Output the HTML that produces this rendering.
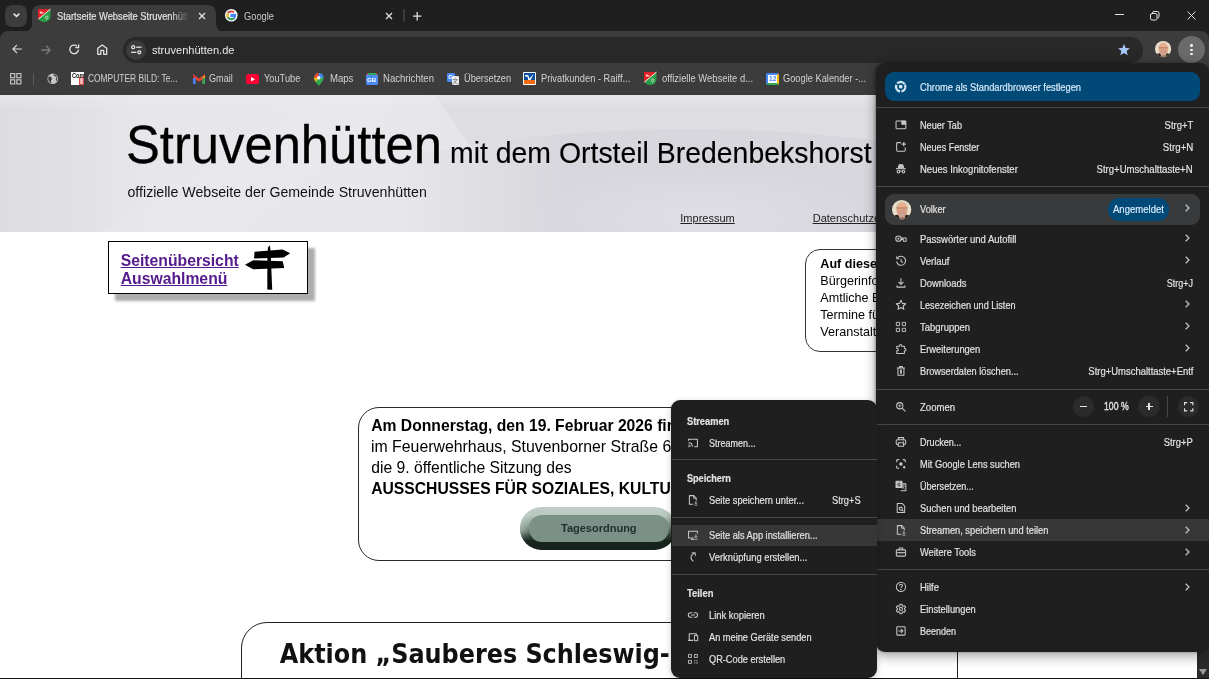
<!DOCTYPE html>
<html lang="de"><head><meta charset="utf-8"><title>Startseite Webseite Struvenhütten</title>
<style>
*{box-sizing:border-box;margin:0;padding:0}
html,body{width:1209px;height:679px;overflow:hidden;background:#fff;font-family:"Liberation Sans",sans-serif}
#root{position:relative;width:1209px;height:679px;overflow:hidden;will-change:transform;opacity:.999}
svg{overflow:visible}
a{color:inherit}
.u{-webkit-text-stroke:0.18px currentColor}
</style></head><body><div id="root">
<div style="position:absolute;left:0;top:94px;width:1209px;height:585px;background:#fff;overflow:hidden">
<div style="position:absolute;left:0;top:0;width:1209px;height:137.5px;background:linear-gradient(90deg,#dcdce1 0%,#e0e0e5 6%,#e7e7eb 12%,#e8e8ec 30%,#e6e6ea 37%,#e5e5e9 100%);overflow:hidden"><svg style="position:absolute;left:0;top:0" width="1209" height="138" viewBox="0 0 1209 138"><defs><linearGradient id="bgf" gradientUnits="userSpaceOnUse" x1="400" y1="0" x2="560" y2="0"><stop offset="0" stop-color="#d7d7dd" stop-opacity="0"/><stop offset="1" stop-color="#d7d7dd" stop-opacity="1"/></linearGradient><radialGradient id="bgh" gradientUnits="userSpaceOnUse" cx="700" cy="125" r="170" gradientTransform="translate(0 87) scale(1 .3)"><stop offset="0" stop-color="#e0e0e6" stop-opacity=".8"/><stop offset="1" stop-color="#e0e0e6" stop-opacity="0"/></radialGradient></defs><path d="M100 138 L330 0 L412 0 L240 138 Z" fill="#ececf0" opacity=".3"/><path d="M434 0 H1209 V145 H1110 A420 110 0 0 0 470 51.3 Z" fill="#dddde2"/><ellipse cx="690" cy="145" rx="420" ry="110" fill="url(#bgf)"/><ellipse cx="700" cy="125" rx="170" ry="45" fill="url(#bgh)"/></svg><div style="position:absolute;left:0;top:0;width:1209px;height:16px;background:linear-gradient(180deg,rgba(236,236,240,.6),rgba(236,236,240,0))"></div></div>
</div>
<span style="position:absolute;top:114.10px;height:62px;line-height:62px;font-size:53.5px;font-weight:400;color:#000;white-space:pre;left:126.30px;-webkit-text-stroke:0.3px #000;transform:scaleX(.9484);transform-origin:0 50%;">Struvenhütten</span>
<span style="position:absolute;top:135.10px;height:36px;line-height:36px;font-size:29.7px;font-weight:400;color:#000;white-space:pre;left:450.40px;-webkit-text-stroke:0.15px #000;transform:scaleX(.957);transform-origin:0 50%;">mit dem Ortsteil Bredenbekshorst</span>
<span style="position:absolute;top:183.30px;height:18px;line-height:18px;font-size:14.17px;font-weight:400;color:#111;white-space:pre;left:127.50px;">offizielle Webseite der Gemeinde Struvenhütten</span>
<span style="position:absolute;top:211.40px;height:14px;line-height:14px;font-size:11.02px;font-weight:400;color:#222;white-space:pre;left:680.30px;text-decoration:underline;">Impressum</span>
<span style="position:absolute;top:211.40px;height:14px;line-height:14px;font-size:11.02px;font-weight:400;color:#222;white-space:pre;left:812.70px;text-decoration:underline;">Datenschutzerklärung</span>
<div style="position:absolute;left:108px;top:240.5px;width:200.2px;height:53.4px;background:#fff;border:1.6px solid #000;box-shadow:7px 7px 2.5px #adadad;"></div>
<span style="position:absolute;top:252.20px;height:18px;line-height:18px;font-size:15.74px;font-weight:700;color:#551a8b;white-space:pre;left:120.70px;text-decoration:underline;">Seitenübersicht</span>
<span style="position:absolute;top:269.70px;height:18px;line-height:18px;font-size:15.74px;font-weight:700;color:#551a8b;white-space:pre;left:120.70px;text-decoration:underline;">Auswahlmenü</span>
<svg style="position:absolute;left:245.00px;top:245.00px;" width="45" height="45" viewBox="0 0 45 45"><g fill="#000"><path d="M23 2.4 L25 0.2 L25.6 8 L22.6 8 Z"/><path d="M9.5 6.8 L37.7 4.6 L45.2 8.2 L38.6 12.6 L9.1 13.6 Z"/><path d="M0 19.8 L8.2 15.3 L37.7 16.3 L39.2 23 L8.2 24.3 Z"/><path d="M22.4 6 L25.6 6 L27.2 44.8 L22.3 44.6 Z"/></g></svg>
<div style="position:absolute;left:805px;top:248.9px;width:140px;height:103.6px;background:#fff;border:1px solid #333;border-radius:15px;"></div>
<span style="position:absolute;top:256.10px;height:16px;line-height:16px;font-size:12.6px;font-weight:700;color:#000;white-space:pre;left:820.30px;">Auf dieser Seite</span>
<span style="position:absolute;top:273.00px;height:16px;line-height:16px;font-size:12.6px;font-weight:400;color:#000;white-space:pre;left:820.30px;">Bürgerinformationen</span>
<span style="position:absolute;top:289.90px;height:16px;line-height:16px;font-size:12.6px;font-weight:400;color:#000;white-space:pre;left:820.30px;">Amtliche Bekanntmachungen</span>
<span style="position:absolute;top:306.80px;height:16px;line-height:16px;font-size:12.6px;font-weight:400;color:#000;white-space:pre;left:820.30px;">Termine für die Gemeinde</span>
<span style="position:absolute;top:323.70px;height:16px;line-height:16px;font-size:12.6px;font-weight:400;color:#000;white-space:pre;left:820.30px;">Veranstaltungen</span>
<div style="position:absolute;left:358px;top:406.7px;width:420px;height:154px;background:#fff;border:1px solid #2a2a2a;border-radius:21px;"></div>
<span style="position:absolute;top:415.80px;height:20px;line-height:20px;font-size:15.7px;font-weight:700;color:#000;white-space:pre;left:371.20px;">Am Donnerstag, den 19. Februar 2026 findet um 19:30 Uhr</span>
<span style="position:absolute;top:437.00px;height:20px;line-height:20px;font-size:15.7px;font-weight:400;color:#000;white-space:pre;left:371.20px;transform:scaleX(1.01);transform-origin:0 50%;">im Feuerwehrhaus, Stuvenborner Straße 6, Struvenhütten</span>
<span style="position:absolute;top:458.20px;height:20px;line-height:20px;font-size:15.7px;font-weight:400;color:#000;white-space:pre;left:371.20px;">die 9. öffentliche Sitzung des</span>
<span style="position:absolute;top:479.40px;height:20px;line-height:20px;font-size:15.7px;font-weight:700;color:#000;white-space:pre;left:371.20px;">AUSSCHUSSES FÜR SOZIALES, KULTUR UND SPORT statt.</span>
<div style="position:absolute;left:520.4px;top:506.8px;width:156px;height:42.9px;border-radius:21.5px;background:linear-gradient(180deg,#becdc5 0%,#b9c9c0 20%,#7f948a 42%,#31443a 66%,#17241d 79%,#15221b 100%);"></div>
<div style="position:absolute;left:520.4px;top:506.8px;width:156px;height:42.9px;border-radius:21.5px;background:linear-gradient(90deg,rgba(205,216,209,.6) 0,rgba(205,216,209,0) 13px);-webkit-mask-image:linear-gradient(180deg,#000 0,#000 55%,transparent 80%);mask-image:linear-gradient(180deg,#000 0,#000 55%,transparent 80%)"></div>
<div style="position:absolute;left:528.8px;top:515.3px;width:140px;height:26.5px;border-radius:13.2px;background:#7b9187;"></div>
<span style="position:absolute;top:521.30px;height:14px;line-height:14px;font-size:11.0px;font-weight:700;color:#1f2f2a;white-space:pre;left:561.00px;">Tagesordnung</span>
<div style="position:absolute;left:240.5px;top:622px;width:717.5px;height:90px;background:#fff;border:1.2px solid #222;border-radius:26px;"></div>
<span style="position:absolute;top:637.00px;height:34px;line-height:34px;font-size:26.6px;font-weight:700;color:#111;white-space:pre;font-family:'DejaVu Sans Condensed','DejaVu Sans',sans-serif;left:279.80px;letter-spacing:-0.02px;">Aktion „Sauberes Schleswig-Holstein“</span>
<div style="position:absolute;left:1197px;top:94px;width:12px;height:585px;background:#2b2b2b;"></div>
<svg style="position:absolute;left:1199.00px;top:669.00px;" width="8" height="6" viewBox="0 0 8 6"><path d="M0 0 L8 0 L4 6 Z" fill="#9b9b9b"/></svg>
<div style="position:absolute;left:0px;top:677.6px;width:1209px;height:2px;background:#111;"></div>
<div style="position:absolute;left:0px;top:0px;width:1209px;height:42px;background:#1f1f1f;"></div>
<div style="position:absolute;left:0px;top:31px;width:1209px;height:63.5px;background:#3c3c3c;border-radius:8px 8px 0 0;"></div>
<div style="position:absolute;left:5px;top:5px;width:22px;height:21.5px;background:#3c3c3c;border-radius:7px;"></div>
<svg style="position:absolute;left:12.50px;top:13.20px;" width="7" height="4.5" viewBox="0 0 7 4.5"><path d="M0.6 0.6 L3.5 3.4 L6.4 0.6" fill="none" stroke="#e3e3e3" stroke-width="1.5"/></svg>
<div style="position:absolute;left:32px;top:5px;width:183.5px;height:27px;background:#3c3c3c;border-radius:8px 8px 0 0;"></div>
<svg style="position:absolute;left:24.00px;top:24.00px;" width="8" height="8" viewBox="0 0 8 8"><path d="M8 0 L8 8 L0 8 A8 8 0 0 0 8 0 Z" fill="#3c3c3c"/></svg>
<svg style="position:absolute;left:215.50px;top:24.00px;" width="8" height="8" viewBox="0 0 8 8"><path d="M0 0 L0 8 L8 8 A8 8 0 0 1 0 0 Z" fill="#3c3c3c"/></svg>
<svg style="position:absolute;left:37.90px;top:9.00px;" width="12.5" height="13.2" viewBox="0 0 12.5 13.2"><path d="M0 0 H12.5 V6.8 Q12.5 12.6 6.25 13.2 Q0 12.6 0 6.8 Z" fill="#2c9c49"/><path d="M0 0 H12.5 L0 10.2 Z" fill="#df2226"/><path d="M12.4 0.2 L0.3 10.2" stroke="#fff" stroke-width="0.9"/><path d="M1.6 3 L3.2 2.2 L4 3.6 L5.4 3 L5.2 4.4 L2 4.4 Z" fill="#fff" opacity=".85"/><circle cx="8.7" cy="8.3" r="1.3" fill="none" stroke="#fff" stroke-width="0.7" opacity=".85"/><path d="M8 10.4 L9 11.2" stroke="#fff" stroke-width="0.6" opacity=".7"/></svg>
<div style="position:absolute;left:57px;top:8px;width:133px;height:17px;overflow:hidden;-webkit-mask-image:linear-gradient(90deg,#000 114px,transparent 132px);mask-image:linear-gradient(90deg,#000 114px,transparent 132px)"><span class="u" style="position:absolute;top:1.70px;height:14px;line-height:14px;font-size:10.3px;font-weight:400;color:#e3e3e3;white-space:pre;transform:scaleX(0.9066);transform-origin:0 50%;left:0.00px;">Startseite Webseite Struvenhütten</span></div>
<svg style="position:absolute;left:198.00px;top:12.00px;" width="8" height="8" viewBox="0 0 8 8"><path d="M1 1 L7 7 M7 1 L1 7" stroke="#e3e3e3" stroke-width="1.3" fill="none"/></svg>
<svg style="position:absolute;left:224.90px;top:9.00px;" width="12.6" height="12.6" viewBox="0 0 14 14"><circle cx="7" cy="7" r="7" fill="#fff"/><path d="M7 2.7 A4.3 4.3 0 1 0 11.2 7.9 L7 7.9 L7 6.2 L12.4 6.2" fill="none" stroke="#4285f4" stroke-width="2.1"/><path d="M3.5 4.5 A4.3 4.3 0 0 1 10 3.8" fill="none" stroke="#ea4335" stroke-width="2.1"/><path d="M3.5 9.5 A4.3 4.3 0 0 1 3.5 4.5" fill="none" stroke="#fbbc05" stroke-width="2.1"/><path d="M10 10.2 A4.3 4.3 0 0 1 3.5 9.5" fill="none" stroke="#34a853" stroke-width="2.1"/></svg>
<span style="position:absolute;top:9.50px;height:14px;line-height:14px;font-size:10.3px;font-weight:400;color:#c9c9c9;white-space:pre;transform:scaleX(0.9031);transform-origin:0 50%;left:243.80px;">Google</span>
<svg style="position:absolute;left:384.70px;top:12.00px;" width="8" height="8" viewBox="0 0 8 8"><path d="M1 1 L7 7 M7 1 L1 7" stroke="#e3e3e3" stroke-width="1.3" fill="none"/></svg>
<div style="position:absolute;left:402.9px;top:9px;width:1.7px;height:12.8px;background:#3b3b3b;border-radius:1px;"></div>
<svg style="position:absolute;left:413.20px;top:11.60px;" width="8.4" height="8.4" viewBox="0 0 8.5 8.5"><path d="M4.25 0 V8.5 M0 4.25 H8.5" stroke="#e3e3e3" stroke-width="1.3" fill="none"/></svg>
<div style="position:absolute;left:1115px;top:14.2px;width:9px;height:1px;background:#e3e3e3;"></div>
<svg style="position:absolute;left:1150.00px;top:10.50px;" width="9.5" height="9.5" viewBox="0 0 9.5 9.5"><rect x="0.5" y="2.5" width="6.5" height="6.5" rx="1.5" fill="none" stroke="#e3e3e3" stroke-width="1"/><path d="M2.5 2.3 V2 Q2.5 0.5 4 0.5 H7.5 Q9 0.5 9 2 V5.5 Q9 7 7.5 7 H7.2" fill="none" stroke="#e3e3e3" stroke-width="1"/></svg>
<svg style="position:absolute;left:1186.50px;top:11.00px;" width="9" height="9" viewBox="0 0 9 9"><path d="M0.5 0.5 L8.5 8.5 M8.5 0.5 L0.5 8.5" stroke="#e3e3e3" stroke-width="1" fill="none"/></svg>
<svg style="position:absolute;left:12.20px;top:44.40px;" width="10" height="10" viewBox="0 0 10 10"><path d="M9.8 5 H1.2 M5 0.8 L0.9 5 L5 9.2" stroke="#dadada" stroke-width="1.2" fill="none"/></svg>
<svg style="position:absolute;left:40.50px;top:44.50px;" width="10" height="10" viewBox="0 0 10 10"><path d="M0.2 5 H8.8 M5 0.8 L9.1 5 L5 9.2" stroke="#7a7a7a" stroke-width="1.3" fill="none"/></svg>
<svg style="position:absolute;left:69.00px;top:44.20px;" width="10.5" height="10.5" viewBox="0 0 10.5 10.5"><path d="M9.4 5.6 A4.3 4.3 0 1 1 8 2.2" stroke="#e3e3e3" stroke-width="1.3" fill="none"/><path d="M9.6 0.4 V3.6 H6.4" stroke="#e3e3e3" stroke-width="1.3" fill="none"/></svg>
<svg style="position:absolute;left:97.00px;top:44.00px;" width="10.5" height="11" viewBox="0 0 10.5 11"><path d="M0.8 10.3 V4.2 L5.25 0.9 L9.7 4.2 V10.3 H6.7 V6.4 H3.8 V10.3 Z" stroke="#e3e3e3" stroke-width="1.3" fill="none" stroke-linejoin="round"/></svg>
<div style="position:absolute;left:123px;top:36.5px;width:1020px;height:26.3px;background:#282828;border-radius:13.5px;"></div>
<div style="position:absolute;left:125.5px;top:39.5px;width:20.5px;height:20.5px;background:#3c3c3c;border-radius:50%;"></div>
<svg style="position:absolute;left:130.50px;top:45.00px;" width="10.5" height="9.5" viewBox="0 0 10.5 9.5"><g fill="none" stroke="#e3e3e3" stroke-width="1.3"><circle cx="2.2" cy="2.2" r="1.5"/><path d="M5.2 2.2 H10.5"/><circle cx="8.3" cy="7.3" r="1.5"/><path d="M0 7.3 H5.3"/></g></svg>
<span style="position:absolute;top:42.20px;height:16px;line-height:16px;font-size:11.3px;font-weight:400;color:#e8e8e8;white-space:pre;transform:scaleX(0.9801);transform-origin:0 50%;left:151.80px;">struvenhütten.de</span>
<svg style="position:absolute;left:1118.00px;top:43.80px;" width="12" height="11.5" viewBox="0 0 12 11.5"><path d="M6 0 L7.6 4 L11.9 4.3 L8.6 7.1 L9.7 11.3 L6 9 L2.3 11.3 L3.4 7.1 L0.1 4.3 L4.4 4 Z" fill="#a8c7fa"/></svg>
<svg style="position:absolute;left:1155.30px;top:41.20px;" width="16.2" height="16.2" viewBox="0 0 20 20"><defs><clipPath id="avc1"><circle cx="10" cy="10" r="10"/></clipPath><filter id="avb1" x="-10%" y="-10%" width="120%" height="120%"><feGaussianBlur stdDeviation="0.45"/></filter></defs><circle cx="10" cy="10" r="10" fill="#ebdfc9"/><g clip-path="url(#avc1)"><g filter="url(#avb1)"><ellipse cx="10.2" cy="8" rx="6.6" ry="6.6" fill="#d6cec3"/><ellipse cx="10.3" cy="10.6" rx="5.6" ry="8" fill="#dda387"/><ellipse cx="10.3" cy="5.4" rx="4.2" ry="2.6" fill="#eeb08a" opacity=".8"/><path d="M4.2 8.2 H16" stroke="#8a5a42" stroke-width="0.55" fill="none" opacity=".85"/><path d="M5.8 8.3 H9.2 V9.3 H5.8 Z M11.2 8.3 H14.6 V9.3 H11.2 Z" fill="#c08264" opacity=".5"/><ellipse cx="10.3" cy="13.4" rx="4" ry="3.2" fill="#d39b86" opacity=".9"/><ellipse cx="10.3" cy="15.6" rx="3" ry="1.8" fill="#c9a596" opacity=".9"/><path d="M0.5 17.4 Q4.6 14.2 6.4 15.6 L8.2 19.4 H12.6 L14.2 15.6 Q16 14.2 19.5 17.4 V21 H0.5 Z" fill="#2b2422"/><path d="M8 18 Q10.3 17 12.8 18 L13 21 H7.8 Z" fill="#a07868"/></g></g></svg>
<div style="position:absolute;left:1178px;top:36.2px;width:27px;height:27px;background:#6a6a6a;border-radius:50%;"></div>
<div style="position:absolute;left:1190.45px;top:44.300000000000004px;width:2.3px;height:2.3px;background:#f2f2f2;border-radius:50%;"></div>
<div style="position:absolute;left:1190.45px;top:48.7px;width:2.3px;height:2.3px;background:#f2f2f2;border-radius:50%;"></div>
<div style="position:absolute;left:1190.45px;top:53.1px;width:2.3px;height:2.3px;background:#f2f2f2;border-radius:50%;"></div>
<svg style="position:absolute;left:9.60px;top:73.00px;" width="11.5" height="11.5" viewBox="0 0 11.5 11.5"><g fill="none" stroke="#c7c7c7" stroke-width="1.15"><rect x="0.6" y="0.6" width="4.1" height="4.1"/><rect x="6.8" y="0.6" width="4.1" height="4.1"/><rect x="0.6" y="6.8" width="4.1" height="4.1"/><rect x="6.8" y="6.8" width="4.1" height="4.1"/></g></svg>
<div style="position:absolute;left:33.3px;top:72.5px;width:1px;height:12.5px;background:#5c5c5c;"></div>
<svg style="position:absolute;left:46.50px;top:73.00px;" width="11.5" height="11.5" viewBox="0 0 11.5 11.5"><circle cx="5.75" cy="5.75" r="5.3" fill="#c7c7c7"/><path d="M1.6 3.6 Q3.6 3 4.6 4.8 Q5.6 6.6 4 7.4 Q3.4 9 4.8 10.4 Q1.4 9.4 1.2 5.6 Z M6.6 1 Q6 2.6 7.6 3 Q9.6 3.4 9.4 5.2 Q8.2 6.4 9.2 8.2 Q10.6 6.6 10.2 4.4 Q9.4 1.8 6.6 1 Z" fill="#3c3c3c"/></svg>
<div style="position:absolute;left:71px;top:71.7px;width:13.2px;height:13.4px;background:#fff;"></div>
<div style="position:absolute;left:78.7px;top:76.6px;width:5.2px;height:8.2px;background:#ecb4b4;border:1px solid #d84a4a;"></div>
<span style="position:absolute;top:72.20px;height:8px;line-height:8px;font-size:6.4px;font-weight:700;color:#111;white-space:pre;transform:scaleX(0.8730);transform-origin:0 50%;left:71.50px;">Com</span>
<span style="position:absolute;top:72.40px;height:14px;line-height:14px;font-size:10.3px;font-weight:400;color:#d2d2d2;white-space:pre;transform:scaleX(0.8161);transform-origin:0 50%;left:88.30px;">COMPUTER BILD: Te...</span>
<svg style="position:absolute;left:192.60px;top:74.50px;" width="12" height="9" viewBox="0 0 12 9"><path d="M1.3 8.8 V1.6 L6 5.2 L10.7 1.6 V8.8" fill="none" stroke="#ea4335" stroke-width="2.6" stroke-linejoin="miter"/><path d="M1.3 9 V2.6" stroke="#4285f4" stroke-width="2.6"/><path d="M10.7 9 V2.6" stroke="#34a853" stroke-width="2.6"/><path d="M9.4 2.6 L12 0.6 V3 Z" fill="#fbbc05"/><path d="M2.6 2.6 L0 0.6 V3 Z" fill="#c5221f"/></svg>
<span style="position:absolute;top:72.40px;height:14px;line-height:14px;font-size:10.3px;font-weight:400;color:#d2d2d2;white-space:pre;transform:scaleX(0.8851);transform-origin:0 50%;left:209.20px;">Gmail</span>
<div style="position:absolute;left:245.8px;top:74.3px;width:13.2px;height:9.6px;background:#ff0033;border-radius:2.6px;"></div>
<svg style="position:absolute;left:250.80px;top:76.80px;" width="4" height="4.6" viewBox="0 0 4 4.6"><path d="M0 0 L4 2.3 L0 4.6 Z" fill="#fff"/></svg>
<span style="position:absolute;top:72.40px;height:14px;line-height:14px;font-size:10.3px;font-weight:400;color:#d2d2d2;white-space:pre;transform:scaleX(0.8970);transform-origin:0 50%;left:263.70px;">YouTube</span>
<svg style="position:absolute;left:313.80px;top:72.60px;" width="9.6" height="13" viewBox="0 0 9.6 13"><path d="M4.8 13 Q0 7.6 0 4.8 A4.8 4.8 0 0 1 9.6 4.8 Q9.6 7.6 4.8 13 Z" fill="#34a853"/><path d="M0 4.8 A4.8 4.8 0 0 1 4.8 0 L4.8 4.8 Z" fill="#ea4335"/><path d="M4.8 0 A4.8 4.8 0 0 1 9.6 4.8 L4.8 4.8 Z" fill="#4285f4"/><path d="M0 4.8 H4.8 L1.6 9 Q0 6.4 0 4.8Z" fill="#fbbc05"/><circle cx="4.8" cy="4.8" r="1.7" fill="#fff"/></svg>
<span style="position:absolute;top:72.40px;height:14px;line-height:14px;font-size:10.3px;font-weight:400;color:#d2d2d2;white-space:pre;transform:scaleX(0.9290);transform-origin:0 50%;left:329.60px;">Maps</span>
<div style="position:absolute;left:365.8px;top:74.2px;width:12.4px;height:10.8px;background:#4c8bf5;border-radius:1.5px;"></div>
<div style="position:absolute;left:367px;top:72.6px;width:10px;height:2px;background:#ea4335;border-radius:1px 1px 0 0;"></div>
<div style="position:absolute;left:368.2px;top:73.4px;width:7.6px;height:1.4px;background:#34a853;"></div>
<span style="position:absolute;top:75.80px;height:8px;line-height:8px;font-size:6px;font-weight:700;color:#fff;white-space:pre;transform:scaleX(1.0444);transform-origin:0 50%;left:367.30px;">GB</span>
<span style="position:absolute;top:72.40px;height:14px;line-height:14px;font-size:10.3px;font-weight:400;color:#d2d2d2;white-space:pre;transform:scaleX(0.9281);transform-origin:0 50%;left:383.20px;">Nachrichten</span>
<div style="position:absolute;left:446.6px;top:73px;width:8.6px;height:9px;background:#4c8bf5;border-radius:1.2px;"></div>
<div style="position:absolute;left:451.6px;top:76.2px;width:7.4px;height:8.8px;background:#e8eaed;border-radius:1.2px;"></div>
<span style="position:absolute;top:73.40px;height:8px;line-height:8px;font-size:6.2px;font-weight:700;color:#fff;white-space:pre;left:448.30px;">G</span>
<span style="position:absolute;top:76.80px;height:8px;line-height:8px;font-size:5.6px;font-weight:400;color:#5f6368;white-space:pre;font-family:'Liberation Sans','Noto Sans CJK SC',sans-serif;left:452.40px;">文</span>
<span style="position:absolute;top:72.40px;height:14px;line-height:14px;font-size:10.3px;font-weight:400;color:#d2d2d2;white-space:pre;transform:scaleX(0.8926);transform-origin:0 50%;left:463.50px;">Übersetzen</span>
<div style="position:absolute;left:523px;top:72.4px;width:13.2px;height:12.8px;background:#fff;border-radius:1px;"></div>
<div style="position:absolute;left:524px;top:73.4px;width:11.2px;height:6.2px;background:#0a4f9e;"></div>
<svg style="position:absolute;left:525.40px;top:74.20px;" width="9" height="6.4" viewBox="0 0 9 6.4"><path d="M0 1 H3.2 L4.4 4.4 L8.6 0 L5.4 6.4 H3.4 L2.4 2.6 H0 Z" fill="#fff"/></svg>
<div style="position:absolute;left:524px;top:80.2px;width:11.2px;height:3.8px;background:#f26a10;"></div>
<span style="position:absolute;top:72.40px;height:14px;line-height:14px;font-size:10.3px;font-weight:400;color:#d2d2d2;white-space:pre;transform:scaleX(0.9036);transform-origin:0 50%;left:541.00px;">Privatkunden - Raiff...</span>
<svg style="position:absolute;left:644.20px;top:72.40px;" width="12.5" height="13.2" viewBox="0 0 12.5 13.2"><path d="M0 0 H12.5 V6.8 Q12.5 12.6 6.25 13.2 Q0 12.6 0 6.8 Z" fill="#2c9c49"/><path d="M0 0 H12.5 L0 10.2 Z" fill="#df2226"/><path d="M12.4 0.2 L0.3 10.2" stroke="#fff" stroke-width="0.9"/><path d="M1.6 3 L3.2 2.2 L4 3.6 L5.4 3 L5.2 4.4 L2 4.4 Z" fill="#fff" opacity=".85"/><circle cx="8.7" cy="8.3" r="1.3" fill="none" stroke="#fff" stroke-width="0.7" opacity=".85"/><path d="M8 10.4 L9 11.2" stroke="#fff" stroke-width="0.6" opacity=".7"/></svg>
<span style="position:absolute;top:72.40px;height:14px;line-height:14px;font-size:10.3px;font-weight:400;color:#d2d2d2;white-space:pre;transform:scaleX(0.9120);transform-origin:0 50%;left:662.00px;">offizielle Webseite d...</span>
<div style="position:absolute;left:766.2px;top:72.8px;width:12.4px;height:12.4px;background:#fff;border-radius:2px;border:2px solid #4285f4;border-right-color:#fbbc05;border-bottom-color:#34a853;"></div>
<span style="position:absolute;top:75.30px;height:8px;line-height:8px;font-size:6.4px;font-weight:700;color:#4285f4;white-space:pre;transform:scaleX(1.0409);transform-origin:0 50%;left:768.60px;">12</span>
<span style="position:absolute;top:72.40px;height:14px;line-height:14px;font-size:10.3px;font-weight:400;color:#d2d2d2;white-space:pre;transform:scaleX(0.9006);transform-origin:0 50%;left:783.20px;">Google Kalender -...</span>
<div style="position:absolute;left:876.3px;top:63px;width:333.2px;height:588.8px;background:#1f1f1f;border-radius:9px;box-shadow:0 4px 12px 1px rgba(0,0,0,.32),-1px 0 3px rgba(0,0,0,.3);"></div>
<div style="position:absolute;left:885.4px;top:72px;width:314.6px;height:28.5px;background:#004a77;border-radius:9px;"></div>
<svg style="position:absolute;left:894.40px;top:79.80px;" width="13.4" height="13.4" viewBox="0 0 16 16"><g fill="none" stroke="#d3e6f5" stroke-width="1.4" stroke-linejoin="round"><circle cx="8" cy="8" r="5.6" stroke-width="2.7" stroke-dasharray="10.2 1.53" transform="rotate(-25 8 8)"/><circle cx="8" cy="8" r="2.3" fill="#d3e6f5" stroke="none"/></g></svg>
<span class="u" style="position:absolute;top:80.60px;height:14px;line-height:14px;font-size:10.3px;font-weight:400;color:#d9ebfb;white-space:pre;transform:scaleX(0.9016);transform-origin:0 50%;left:920.00px;">Chrome als Standardbrowser festlegen</span>
<div style="position:absolute;left:876.3px;top:107.2px;width:333px;height:1px;background:#474747;"></div>
<svg style="position:absolute;left:895.05px;top:118.95px;" width="11.9" height="11.9" viewBox="0 0 16 16"><g fill="none" stroke="#c7c7c7" stroke-width="1.4" stroke-linejoin="round"><rect x="1.4" y="2.8" width="13.2" height="10.2" rx="1"/><path d="M9.2 3.2 H14.2 V7 H9.2 Z" fill="#c7c7c7"/></g></svg>
<span class="u" style="position:absolute;top:119.20px;height:14px;line-height:14px;font-size:10.3px;font-weight:400;color:#e3e3e3;white-space:pre;transform:scaleX(0.8874);transform-origin:0 50%;left:920.00px;">Neuer Tab</span>
<span class="u" style="position:absolute;top:119.20px;height:14px;line-height:14px;font-size:10.3px;font-weight:400;color:#e3e3e3;white-space:pre;transform:scaleX(0.9170);transform-origin:100% 50%;left:1161.81px;">Strg+T</span>
<svg style="position:absolute;left:895.05px;top:140.95px;" width="11.9" height="11.9" viewBox="0 0 16 16"><g fill="none" stroke="#c7c7c7" stroke-width="1.4" stroke-linejoin="round"><path d="M8 2.2 H3.4 Q2.2 2.2 2.2 3.4 V12.6 Q2.2 13.8 3.4 13.8 H12.6 Q13.8 13.8 13.8 12.6 V8.6"/><path d="M11.8 1.4 V7 M9 4.2 H14.6" stroke-width="1.5"/></g></svg>
<span class="u" style="position:absolute;top:141.20px;height:14px;line-height:14px;font-size:10.3px;font-weight:400;color:#e3e3e3;white-space:pre;transform:scaleX(0.8794);transform-origin:0 50%;left:920.00px;">Neues Fenster</span>
<span class="u" style="position:absolute;top:141.20px;height:14px;line-height:14px;font-size:10.3px;font-weight:400;color:#e3e3e3;white-space:pre;transform:scaleX(0.9430);transform-origin:100% 50%;left:1160.66px;">Strg+N</span>
<svg style="position:absolute;left:895.05px;top:162.95px;" width="11.9" height="11.9" viewBox="0 0 16 16"><g fill="none" stroke="#c7c7c7" stroke-width="1.4" stroke-linejoin="round"><path d="M4.4 6.4 L5.6 2.4 H10.4 L11.6 6.4 Z" fill="#c7c7c7"/><path d="M1.4 7.6 H14.6" stroke-width="1.5"/><circle cx="4.6" cy="11.6" r="1.8"/><circle cx="11.4" cy="11.6" r="1.8"/><path d="M6.4 11.3 Q8 10.3 9.6 11.3"/></g></svg>
<span class="u" style="position:absolute;top:163.20px;height:14px;line-height:14px;font-size:10.3px;font-weight:400;color:#e3e3e3;white-space:pre;transform:scaleX(0.9235);transform-origin:0 50%;left:920.00px;">Neues Inkognitofenster</span>
<span class="u" style="position:absolute;top:163.20px;height:14px;line-height:14px;font-size:10.3px;font-weight:400;color:#e3e3e3;white-space:pre;transform:scaleX(0.9267);transform-origin:100% 50%;left:1089.41px;">Strg+Umschalttaste+N</span>
<div style="position:absolute;left:876.3px;top:186px;width:333px;height:1px;background:#474747;"></div>
<div style="position:absolute;left:885px;top:194px;width:315px;height:31px;background:#383a3c;border-radius:9px;"></div>
<svg style="position:absolute;left:891.50px;top:199.70px;" width="19.3" height="19.3" viewBox="0 0 20 20"><defs><clipPath id="avc2"><circle cx="10" cy="10" r="10"/></clipPath><filter id="avb2" x="-10%" y="-10%" width="120%" height="120%"><feGaussianBlur stdDeviation="0.45"/></filter></defs><circle cx="10" cy="10" r="10" fill="#ebdfc9"/><g clip-path="url(#avc2)"><g filter="url(#avb2)"><ellipse cx="10.2" cy="8" rx="6.6" ry="6.6" fill="#d6cec3"/><ellipse cx="10.3" cy="10.6" rx="5.6" ry="8" fill="#dda387"/><ellipse cx="10.3" cy="5.4" rx="4.2" ry="2.6" fill="#eeb08a" opacity=".8"/><path d="M4.2 8.2 H16" stroke="#8a5a42" stroke-width="0.55" fill="none" opacity=".85"/><path d="M5.8 8.3 H9.2 V9.3 H5.8 Z M11.2 8.3 H14.6 V9.3 H11.2 Z" fill="#c08264" opacity=".5"/><ellipse cx="10.3" cy="13.4" rx="4" ry="3.2" fill="#d39b86" opacity=".9"/><ellipse cx="10.3" cy="15.6" rx="3" ry="1.8" fill="#c9a596" opacity=".9"/><path d="M0.5 17.4 Q4.6 14.2 6.4 15.6 L8.2 19.4 H12.6 L14.2 15.6 Q16 14.2 19.5 17.4 V21 H0.5 Z" fill="#2b2422"/><path d="M8 18 Q10.3 17 12.8 18 L13 21 H7.8 Z" fill="#a07868"/></g></g></svg>
<span class="u" style="position:absolute;top:203.40px;height:14px;line-height:14px;font-size:10.3px;font-weight:400;color:#e3e3e3;white-space:pre;transform:scaleX(0.8978);transform-origin:0 50%;left:920.00px;">Volker</span>
<div style="position:absolute;left:1108px;top:198px;width:60.6px;height:22.6px;background:#004a77;border-radius:11.3px;"></div>
<span class="u" style="position:absolute;top:203.40px;height:14px;line-height:14px;font-size:10.3px;font-weight:400;color:#d9ebfb;white-space:pre;transform:scaleX(0.9278);transform-origin:0 50%;left:1113.00px;">Angemeldet</span>
<svg style="position:absolute;left:1185.20px;top:204.40px;" width="4.6" height="8" viewBox="0 0 4.6 8"><path d="M0.7 0.7 L4 4 L0.7 7.3" fill="none" stroke="#c7c7c7" stroke-width="1.2"/></svg>
<svg style="position:absolute;left:895.05px;top:232.95px;" width="11.9" height="11.9" viewBox="0 0 16 16"><g fill="none" stroke="#c7c7c7" stroke-width="1.4" stroke-linejoin="round"><circle cx="4.6" cy="7.6" r="3.6"/><circle cx="4.6" cy="7.6" r="1" fill="#c7c7c7" stroke-width="0.8"/><path d="M8.2 6.6 H15 V11 H11.2 V8.6 H8"/></g></svg>
<span class="u" style="position:absolute;top:233.20px;height:14px;line-height:14px;font-size:10.3px;font-weight:400;color:#e3e3e3;white-space:pre;transform:scaleX(0.9203);transform-origin:0 50%;left:920.00px;">Passwörter und Autofill</span>
<svg style="position:absolute;left:1185.20px;top:234.40px;" width="4.6" height="8" viewBox="0 0 4.6 8"><path d="M0.7 0.7 L4 4 L0.7 7.3" fill="none" stroke="#c7c7c7" stroke-width="1.2"/></svg>
<svg style="position:absolute;left:895.05px;top:254.95px;" width="11.9" height="11.9" viewBox="0 0 16 16"><g fill="none" stroke="#c7c7c7" stroke-width="1.4" stroke-linejoin="round"><path d="M3.2 4.4 A6 6 0 1 1 2.2 8.6"/><path d="M2.4 1.8 V5 H5.6"/><path d="M8.2 5 V8.4 L10.6 10.2"/></g></svg>
<span class="u" style="position:absolute;top:255.20px;height:14px;line-height:14px;font-size:10.3px;font-weight:400;color:#e3e3e3;white-space:pre;transform:scaleX(0.9170);transform-origin:0 50%;left:920.00px;">Verlauf</span>
<svg style="position:absolute;left:1185.20px;top:256.40px;" width="4.6" height="8" viewBox="0 0 4.6 8"><path d="M0.7 0.7 L4 4 L0.7 7.3" fill="none" stroke="#c7c7c7" stroke-width="1.2"/></svg>
<svg style="position:absolute;left:895.05px;top:276.95px;" width="11.9" height="11.9" viewBox="0 0 16 16"><g fill="none" stroke="#c7c7c7" stroke-width="1.4" stroke-linejoin="round"><path d="M8 1.8 V9.8 M4.6 6.6 L8 10 L11.4 6.6"/><path d="M2.6 11.6 V13.6 H13.4 V11.6"/></g></svg>
<span class="u" style="position:absolute;top:277.20px;height:14px;line-height:14px;font-size:10.3px;font-weight:400;color:#e3e3e3;white-space:pre;transform:scaleX(0.9126);transform-origin:0 50%;left:920.00px;">Downloads</span>
<span class="u" style="position:absolute;top:277.20px;height:14px;line-height:14px;font-size:10.3px;font-weight:400;color:#e3e3e3;white-space:pre;transform:scaleX(0.8753);transform-origin:100% 50%;left:1162.95px;">Strg+J</span>
<svg style="position:absolute;left:895.05px;top:298.95px;" width="11.9" height="11.9" viewBox="0 0 16 16"><g fill="none" stroke="#c7c7c7" stroke-width="1.4" stroke-linejoin="round"><path d="M8 1.8 L9.9 5.9 L14.4 6.4 L11 9.4 L12 13.8 L8 11.5 L4 13.8 L5 9.4 L1.6 6.4 L6.1 5.9 Z"/></g></svg>
<span class="u" style="position:absolute;top:299.20px;height:14px;line-height:14px;font-size:10.3px;font-weight:400;color:#e3e3e3;white-space:pre;transform:scaleX(0.8826);transform-origin:0 50%;left:920.00px;">Lesezeichen und Listen</span>
<svg style="position:absolute;left:1185.20px;top:300.40px;" width="4.6" height="8" viewBox="0 0 4.6 8"><path d="M0.7 0.7 L4 4 L0.7 7.3" fill="none" stroke="#c7c7c7" stroke-width="1.2"/></svg>
<svg style="position:absolute;left:895.05px;top:320.95px;" width="11.9" height="11.9" viewBox="0 0 16 16"><g fill="none" stroke="#c7c7c7" stroke-width="1.4" stroke-linejoin="round"><g stroke-width="1.25"><rect x="1.8" y="1.8" width="4.4" height="4.4"/><rect x="9.8" y="1.8" width="4.4" height="4.4"/><rect x="1.8" y="9.8" width="4.4" height="4.4"/><rect x="9.8" y="9.8" width="4.4" height="4.4"/></g></g></svg>
<span class="u" style="position:absolute;top:321.20px;height:14px;line-height:14px;font-size:10.3px;font-weight:400;color:#e3e3e3;white-space:pre;transform:scaleX(0.9193);transform-origin:0 50%;left:920.00px;">Tabgruppen</span>
<svg style="position:absolute;left:1185.20px;top:322.40px;" width="4.6" height="8" viewBox="0 0 4.6 8"><path d="M0.7 0.7 L4 4 L0.7 7.3" fill="none" stroke="#c7c7c7" stroke-width="1.2"/></svg>
<svg style="position:absolute;left:895.05px;top:342.95px;" width="11.9" height="11.9" viewBox="0 0 16 16"><g fill="none" stroke="#c7c7c7" stroke-width="1.4" stroke-linejoin="round"><path d="M2.4 4.4 H6.2 V3.6 Q6.2 2 7.6 2 Q9 2 9 3.6 V4.4 H12.6 V7.4 H13.2 Q14.8 7.4 14.8 9 Q14.8 10.6 13.2 10.6 H12.6 V14 H2.4 V10.6 H3 Q4.6 10.6 4.6 9 Q4.6 7.4 3 7.4 H2.4 Z"/></g></svg>
<span class="u" style="position:absolute;top:343.20px;height:14px;line-height:14px;font-size:10.3px;font-weight:400;color:#e3e3e3;white-space:pre;transform:scaleX(0.9065);transform-origin:0 50%;left:920.00px;">Erweiterungen</span>
<svg style="position:absolute;left:1185.20px;top:344.40px;" width="4.6" height="8" viewBox="0 0 4.6 8"><path d="M0.7 0.7 L4 4 L0.7 7.3" fill="none" stroke="#c7c7c7" stroke-width="1.2"/></svg>
<svg style="position:absolute;left:895.05px;top:364.95px;" width="11.9" height="11.9" viewBox="0 0 16 16"><g fill="none" stroke="#c7c7c7" stroke-width="1.4" stroke-linejoin="round"><path d="M2.6 4 H13.4 M6 3.8 V2.2 H10 V3.8"/><path d="M4 4.2 V13.8 H12 V4.2"/><path d="M8 6.2 V11.8" stroke-width="2.4"/></g></svg>
<span class="u" style="position:absolute;top:365.20px;height:14px;line-height:14px;font-size:10.3px;font-weight:400;color:#e3e3e3;white-space:pre;transform:scaleX(0.8926);transform-origin:0 50%;left:920.00px;">Browserdaten löschen...</span>
<span class="u" style="position:absolute;top:365.20px;height:14px;line-height:14px;font-size:10.3px;font-weight:400;color:#e3e3e3;white-space:pre;transform:scaleX(0.9182);transform-origin:100% 50%;left:1078.53px;">Strg+Umschalttaste+Entf</span>
<div style="position:absolute;left:876.3px;top:388.6px;width:333px;height:1px;background:#474747;"></div>
<svg style="position:absolute;left:895.05px;top:401.05px;" width="11.9" height="11.9" viewBox="0 0 16 16"><g fill="none" stroke="#c7c7c7" stroke-width="1.4" stroke-linejoin="round"><circle cx="6.4" cy="6.4" r="4.2"/><path d="M9.6 9.6 L14 14"/><path d="M4.4 6.4 H8.4 M6.4 4.4 V8.4" stroke-width="1.1"/></g></svg>
<span class="u" style="position:absolute;top:401.30px;height:14px;line-height:14px;font-size:10.3px;font-weight:400;color:#e3e3e3;white-space:pre;transform:scaleX(0.9264);transform-origin:0 50%;left:920.00px;">Zoomen</span>
<div style="position:absolute;left:1072.9px;top:395.8px;width:21.6px;height:21.6px;background:#2b2b2b;border-radius:50%;"></div>
<div style="position:absolute;left:1138.2px;top:395.8px;width:21.6px;height:21.6px;background:#2b2b2b;border-radius:50%;"></div>
<div style="position:absolute;left:1177.5px;top:395.8px;width:21.6px;height:21.6px;background:#2b2b2b;border-radius:50%;"></div>
<div style="position:absolute;left:1080.2px;top:406.1px;width:7px;height:1.1px;background:#e3e3e3;"></div>
<div style="position:absolute;left:1145.5px;top:406.1px;width:7px;height:1.1px;background:#e3e3e3;"></div>
<div style="position:absolute;left:1148.45px;top:403.1px;width:1.1px;height:7px;background:#e3e3e3;"></div>
<span class="u" style="position:absolute;top:399.50px;height:14px;line-height:14px;font-size:10.3px;font-weight:400;color:#e3e3e3;white-space:pre;transform:scaleX(0.8424);transform-origin:0 50%;left:1104.20px;-webkit-text-stroke:.35px #e3e3e3;">100 %</span>
<div style="position:absolute;left:1167.2px;top:395.5px;width:1px;height:21.5px;background:#474747;"></div>
<svg style="position:absolute;left:1183.70px;top:401.90px;" width="9.4" height="9.4" viewBox="0 0 10 10"><path d="M0.6 3.4 V0.6 H3.4 M6.6 0.6 H9.4 V3.4 M9.4 6.6 V9.4 H6.6 M3.4 9.4 H0.6 V6.6" fill="none" stroke="#e3e3e3" stroke-width="1.2"/></svg>
<div style="position:absolute;left:876.3px;top:423.8px;width:333px;height:1px;background:#474747;"></div>
<svg style="position:absolute;left:895.05px;top:435.85px;" width="11.9" height="11.9" viewBox="0 0 16 16"><g fill="none" stroke="#c7c7c7" stroke-width="1.4" stroke-linejoin="round"><path d="M4.4 5 V2.2 H11.6 V5"/><rect x="1.6" y="5" width="12.8" height="6.4" rx="1.6"/><path d="M4.4 9 H11.6 V13.8 H4.4 Z" fill="#1f1f1f"/><path d="M11 7.2 H12.2"/></g></svg>
<span class="u" style="position:absolute;top:436.10px;height:14px;line-height:14px;font-size:10.3px;font-weight:400;color:#e3e3e3;white-space:pre;transform:scaleX(0.8820);transform-origin:0 50%;left:920.00px;">Drucken...</span>
<span class="u" style="position:absolute;top:436.10px;height:14px;line-height:14px;font-size:10.3px;font-weight:400;color:#e3e3e3;white-space:pre;transform:scaleX(0.9161);transform-origin:100% 50%;left:1161.23px;">Strg+P</span>
<svg style="position:absolute;left:895.05px;top:457.95px;" width="11.9" height="11.9" viewBox="0 0 16 16"><g fill="none" stroke="#c7c7c7" stroke-width="1.4" stroke-linejoin="round"><path d="M2.2 5.6 V3.6 Q2.2 2.2 3.6 2.2 H5.6 M10.4 2.2 H12.4 Q13.8 2.2 13.8 3.6 V5.6 M2.2 10.4 V12.4 Q2.2 13.8 3.6 13.8 H5.6"/><circle cx="8" cy="8" r="1.6" fill="#c7c7c7"/><circle cx="12.4" cy="12.4" r="0.9" fill="#c7c7c7"/></g></svg>
<span class="u" style="position:absolute;top:458.20px;height:14px;line-height:14px;font-size:10.3px;font-weight:400;color:#e3e3e3;white-space:pre;transform:scaleX(0.9005);transform-origin:0 50%;left:920.00px;">Mit Google Lens suchen</span>
<svg style="position:absolute;left:895.05px;top:480.05px;" width="11.9" height="11.9" viewBox="0 0 16 16"><g fill="none" stroke="#c7c7c7" stroke-width="1.4" stroke-linejoin="round"><path d="M1.4 1.8 H9.4 V10.2 H1.4 Z" fill="#c7c7c7"/><path d="M7 4.6 Q5.4 3.4 4.2 4.8 Q3.2 6.2 4.2 7.6 Q5.6 8.8 7 7.4 V6.2 H5.6" stroke="#1f1f1f" stroke-width="1"/><path d="M7 5.2 H14.6 V14.4 H7.6"/><path d="M9.4 8 H13 M11.2 7 V8 M12.6 8 Q11.8 10.6 9.6 11.8 M10 9 Q11 11 12.8 11.8" stroke-width="0.9"/></g></svg>
<span class="u" style="position:absolute;top:480.30px;height:14px;line-height:14px;font-size:10.3px;font-weight:400;color:#e3e3e3;white-space:pre;transform:scaleX(0.8784);transform-origin:0 50%;left:920.00px;">Übersetzen...</span>
<svg style="position:absolute;left:895.05px;top:502.05px;" width="11.9" height="11.9" viewBox="0 0 16 16"><g fill="none" stroke="#c7c7c7" stroke-width="1.4" stroke-linejoin="round"><path d="M3 14 V2 H9.6 L13 5.4 V14 Z"/><circle cx="7.8" cy="9" r="2.1"/><path d="M9.4 10.6 L11.4 12.6"/></g></svg>
<span class="u" style="position:absolute;top:502.30px;height:14px;line-height:14px;font-size:10.3px;font-weight:400;color:#e3e3e3;white-space:pre;transform:scaleX(0.9052);transform-origin:0 50%;left:920.00px;">Suchen und bearbeiten</span>
<svg style="position:absolute;left:1185.20px;top:503.50px;" width="4.6" height="8" viewBox="0 0 4.6 8"><path d="M0.7 0.7 L4 4 L0.7 7.3" fill="none" stroke="#c7c7c7" stroke-width="1.2"/></svg>
<div style="position:absolute;left:876.3px;top:519px;width:333px;height:22px;background:#373737;"></div>
<svg style="position:absolute;left:895.05px;top:524.05px;" width="11.9" height="11.9" viewBox="0 0 16 16"><g fill="none" stroke="#c7c7c7" stroke-width="1.4" stroke-linejoin="round"><path d="M12.4 8.6 V5.4 L9.2 2.2 H3.2 V13.8 H8.4"/><path d="M8.8 2.4 V5.8 H12.2" stroke-width="1.1"/><path d="M12 9.6 V13 M10.4 11.6 L12 13.2 L13.6 11.6 M10 15 H14" stroke-width="1.1"/></g></svg>
<span class="u" style="position:absolute;top:524.30px;height:14px;line-height:14px;font-size:10.3px;font-weight:400;color:#e3e3e3;white-space:pre;transform:scaleX(0.9009);transform-origin:0 50%;left:920.00px;">Streamen, speichern und teilen</span>
<svg style="position:absolute;left:1185.20px;top:525.50px;" width="4.6" height="8" viewBox="0 0 4.6 8"><path d="M0.7 0.7 L4 4 L0.7 7.3" fill="none" stroke="#c7c7c7" stroke-width="1.2"/></svg>
<svg style="position:absolute;left:895.05px;top:546.05px;" width="11.9" height="11.9" viewBox="0 0 16 16"><g fill="none" stroke="#c7c7c7" stroke-width="1.4" stroke-linejoin="round"><rect x="1.8" y="5.2" width="12.4" height="8.4" rx="1.2"/><path d="M5.6 5 V2.8 H10.4 V5"/><path d="M1.8 9 H14.2"/><path d="M6.4 8 V10.4 M9.6 8 V10.4" stroke-width="1.1"/></g></svg>
<span class="u" style="position:absolute;top:546.30px;height:14px;line-height:14px;font-size:10.3px;font-weight:400;color:#e3e3e3;white-space:pre;transform:scaleX(0.9030);transform-origin:0 50%;left:920.00px;">Weitere Tools</span>
<svg style="position:absolute;left:1185.20px;top:547.50px;" width="4.6" height="8" viewBox="0 0 4.6 8"><path d="M0.7 0.7 L4 4 L0.7 7.3" fill="none" stroke="#c7c7c7" stroke-width="1.2"/></svg>
<div style="position:absolute;left:876.3px;top:568.8px;width:333px;height:1px;background:#474747;"></div>
<svg style="position:absolute;left:895.05px;top:581.05px;" width="11.9" height="11.9" viewBox="0 0 16 16"><g fill="none" stroke="#c7c7c7" stroke-width="1.4" stroke-linejoin="round"><circle cx="8" cy="8" r="6.2"/><path d="M6 6.4 Q6 4.4 8 4.4 Q10 4.4 10 6.2 Q10 7.4 8.8 8 Q8 8.5 8 9.6"/><circle cx="8" cy="11.6" r="0.7" fill="#c7c7c7" stroke-width="0.6"/></g></svg>
<span class="u" style="position:absolute;top:581.30px;height:14px;line-height:14px;font-size:10.3px;font-weight:400;color:#e3e3e3;white-space:pre;transform:scaleX(0.9219);transform-origin:0 50%;left:920.00px;">Hilfe</span>
<svg style="position:absolute;left:1185.20px;top:582.50px;" width="4.6" height="8" viewBox="0 0 4.6 8"><path d="M0.7 0.7 L4 4 L0.7 7.3" fill="none" stroke="#c7c7c7" stroke-width="1.2"/></svg>
<svg style="position:absolute;left:895.05px;top:603.05px;" width="11.9" height="11.9" viewBox="0 0 16 16"><g fill="none" stroke="#c7c7c7" stroke-width="1.4" stroke-linejoin="round"><circle cx="8" cy="8" r="2.1"/><path d="M6.7 1.6 H9.3 L9.7 3.5 L11.1 4.3 L12.9 3.7 L14.2 5.9 L12.8 7.2 V8.8 L14.2 10.1 L12.9 12.3 L11.1 11.7 L9.7 12.5 L9.3 14.4 H6.7 L6.3 12.5 L4.9 11.7 L3.1 12.3 L1.8 10.1 L3.2 8.8 V7.2 L1.8 5.9 L3.1 3.7 L4.9 4.3 L6.3 3.5 Z"/></g></svg>
<span class="u" style="position:absolute;top:603.30px;height:14px;line-height:14px;font-size:10.3px;font-weight:400;color:#e3e3e3;white-space:pre;transform:scaleX(0.9009);transform-origin:0 50%;left:920.00px;">Einstellungen</span>
<svg style="position:absolute;left:895.05px;top:625.05px;" width="11.9" height="11.9" viewBox="0 0 16 16"><g fill="none" stroke="#c7c7c7" stroke-width="1.4" stroke-linejoin="round"><path d="M6 2.4 H12.6 Q13.6 2.4 13.6 3.4 V12.6 Q13.6 13.6 12.6 13.6 H3.4 Q2.4 13.6 2.4 12.6 V3.4 Q2.4 2.4 3.4 2.4 H6" /><path d="M4.6 8 H10.4 M8 5.4 L10.6 8 L8 10.6"/></g></svg>
<span class="u" style="position:absolute;top:625.30px;height:14px;line-height:14px;font-size:10.3px;font-weight:400;color:#e3e3e3;white-space:pre;transform:scaleX(0.8731);transform-origin:0 50%;left:920.00px;">Beenden</span>
<div style="position:absolute;left:671.2px;top:399.7px;width:205.6px;height:278.6px;background:#1f1f1f;border-radius:9px;box-shadow:0 2px 6px rgba(0,0,0,.22);"></div>
<span class="u" style="position:absolute;top:414.80px;height:14px;line-height:14px;font-size:10.3px;font-weight:700;color:#e3e3e3;white-space:pre;transform:scaleX(0.8991);transform-origin:0 50%;left:686.80px;">Streamen</span>
<svg style="position:absolute;left:687.25px;top:436.95px;" width="11.9" height="11.9" viewBox="0 0 16 16"><g fill="none" stroke="#c7c7c7" stroke-width="1.4" stroke-linejoin="round"><path d="M2 5.2 V3 H14 V13 H9.6"/><path d="M1.6 13 H3 M2 10.6 Q4.4 10.6 4.4 13 M2 7.8 Q7.2 7.8 7.2 13" stroke-width="1.35"/></g></svg>
<span class="u" style="position:absolute;top:437.00px;height:14px;line-height:14px;font-size:10.3px;font-weight:400;color:#e3e3e3;white-space:pre;transform:scaleX(0.8716);transform-origin:0 50%;left:709.00px;">Streamen...</span>
<div style="position:absolute;left:671.5px;top:459.2px;width:205.3px;height:1px;background:#474747;"></div>
<span class="u" style="position:absolute;top:472.40px;height:14px;line-height:14px;font-size:10.3px;font-weight:700;color:#e3e3e3;white-space:pre;transform:scaleX(0.8816);transform-origin:0 50%;left:686.80px;">Speichern</span>
<svg style="position:absolute;left:687.25px;top:493.85px;" width="11.9" height="11.9" viewBox="0 0 16 16"><g fill="none" stroke="#c7c7c7" stroke-width="1.4" stroke-linejoin="round"><path d="M12.4 8.6 V5.4 L9.2 2.2 H3.2 V13.8 H8.4"/><path d="M8.8 2.4 V5.8 H12.2" stroke-width="1.1"/><path d="M12 9.6 V13 M10.4 11.6 L12 13.2 L13.6 11.6 M10 15 H14" stroke-width="1.1"/></g></svg>
<span class="u" style="position:absolute;top:493.90px;height:14px;line-height:14px;font-size:10.3px;font-weight:400;color:#e3e3e3;white-space:pre;transform:scaleX(0.9019);transform-origin:0 50%;left:709.00px;">Seite speichern unter...</span>
<span class="u" style="position:absolute;top:493.90px;height:14px;line-height:14px;font-size:10.3px;font-weight:400;color:#e3e3e3;white-space:pre;transform:scaleX(0.9003);transform-origin:0 50%;left:831.60px;">Strg+S</span>
<div style="position:absolute;left:671.5px;top:516.8px;width:205.3px;height:1px;background:#474747;"></div>
<div style="position:absolute;left:671.5px;top:524.6px;width:205.3px;height:21.8px;background:#373737;"></div>
<svg style="position:absolute;left:687.25px;top:528.85px;" width="11.9" height="11.9" viewBox="0 0 16 16"><g fill="none" stroke="#c7c7c7" stroke-width="1.4" stroke-linejoin="round"><path d="M9 12 H2 V3 H14 V6"/><path d="M5.4 14 H9.6" /><path d="M12 7 V11.6 M10 9.8 L12 11.8 L14 9.8 M9.8 13.8 H14.2" stroke-width="1.1"/></g></svg>
<span class="u" style="position:absolute;top:528.90px;height:14px;line-height:14px;font-size:10.3px;font-weight:400;color:#e3e3e3;white-space:pre;transform:scaleX(0.8991);transform-origin:0 50%;left:709.00px;">Seite als App installieren...</span>
<svg style="position:absolute;left:687.25px;top:550.95px;" width="11.9" height="11.9" viewBox="0 0 16 16"><g fill="none" stroke="#c7c7c7" stroke-width="1.4" stroke-linejoin="round"><path d="M10.8 2.8 Q5 5 5.4 9.2 Q5.8 12.4 8.8 14"/><path d="M6.2 2.4 H11.2 V7" stroke-width="1.2"/></g></svg>
<span class="u" style="position:absolute;top:551.00px;height:14px;line-height:14px;font-size:10.3px;font-weight:400;color:#e3e3e3;white-space:pre;transform:scaleX(0.9094);transform-origin:0 50%;left:709.00px;">Verknüpfung erstellen...</span>
<div style="position:absolute;left:671.5px;top:573.8px;width:205.3px;height:1px;background:#474747;"></div>
<span class="u" style="position:absolute;top:587.40px;height:14px;line-height:14px;font-size:10.3px;font-weight:700;color:#e3e3e3;white-space:pre;transform:scaleX(0.9103);transform-origin:0 50%;left:686.80px;">Teilen</span>
<svg style="position:absolute;left:687.25px;top:609.05px;" width="11.9" height="11.9" viewBox="0 0 16 16"><g fill="none" stroke="#c7c7c7" stroke-width="1.4" stroke-linejoin="round"><path d="M7 5 H4.6 Q1.8 5 1.8 8 Q1.8 11 4.6 11 H7 M9 5 H11.4 Q14.2 5 14.2 8 Q14.2 11 11.4 11 H9 M5.4 8 H10.6"/></g></svg>
<span class="u" style="position:absolute;top:609.10px;height:14px;line-height:14px;font-size:10.3px;font-weight:400;color:#e3e3e3;white-space:pre;transform:scaleX(0.9110);transform-origin:0 50%;left:709.00px;">Link kopieren</span>
<svg style="position:absolute;left:687.25px;top:631.15px;" width="11.9" height="11.9" viewBox="0 0 16 16"><g fill="none" stroke="#c7c7c7" stroke-width="1.4" stroke-linejoin="round"><path d="M3 12 V3.6 H12.6 V5.4 M1.4 12.6 H8.4"/><rect x="10" y="6" width="4.4" height="7.2" rx="0.6"/></g></svg>
<span class="u" style="position:absolute;top:631.20px;height:14px;line-height:14px;font-size:10.3px;font-weight:400;color:#e3e3e3;white-space:pre;transform:scaleX(0.8962);transform-origin:0 50%;left:709.00px;">An meine Geräte senden</span>
<svg style="position:absolute;left:687.25px;top:652.95px;" width="11.9" height="11.9" viewBox="0 0 16 16"><g fill="none" stroke="#c7c7c7" stroke-width="1.4" stroke-linejoin="round"><g stroke-width="1.2"><rect x="2" y="2" width="4" height="4"/><rect x="10" y="2" width="4" height="4"/><rect x="2" y="10" width="4" height="4"/></g><path d="M9.6 9.6 H11.2 V11.2 H9.6 Z M12.6 12.6 H14.2 V14.2 H12.6 Z M12.6 9.6 H14.2 V11 H12.6 Z M9.6 12.8 H11 V14.2 H9.6 Z" fill="#c7c7c7" stroke="none"/></g></svg>
<span class="u" style="position:absolute;top:653.00px;height:14px;line-height:14px;font-size:10.3px;font-weight:400;color:#e3e3e3;white-space:pre;transform:scaleX(0.8935);transform-origin:0 50%;left:709.00px;">QR-Code erstellen</span>
</div></body></html>
